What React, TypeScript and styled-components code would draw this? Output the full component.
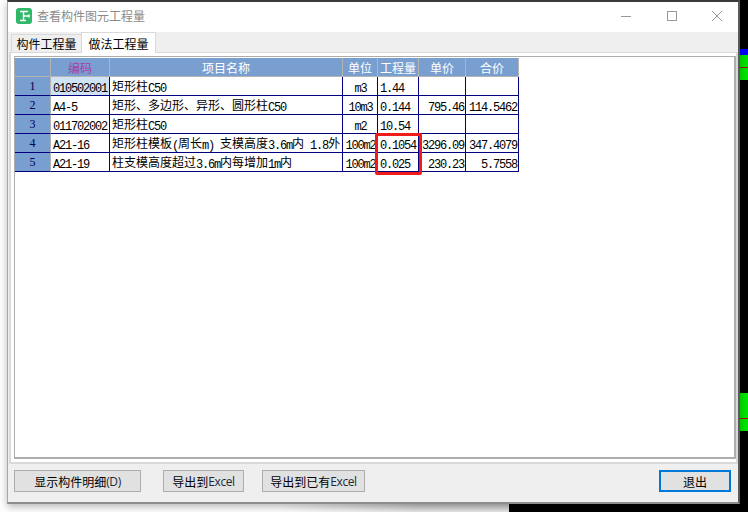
import React from 'react';
import styled, { createGlobalStyle } from 'styled-components';

const cjk = '"Noto Sans CJK SC", "Liberation Sans", sans-serif';

const GlobalStyle = createGlobalStyle`
  html, body {
    margin: 0;
    padding: 0;
    background: #fff;
  }
  * {
    box-sizing: border-box;
  }
`;

type Align = 'left' | 'center' | 'right';

const justify = { left: 'flex-start', center: 'center', right: 'flex-end' };

const __Desktop = styled.div`
  position: relative;
  width: 748px;
  height: 512px;
  overflow: hidden;
  background: #fff;
`;

const __BlackBackdrop = styled.div`
  position: absolute;
  right: 0;
  bottom: 0;
  width: 239px;
  height: 512px;
  background: #000;
`;

const __TaskEdge = styled.div`
  position: absolute;
  left: 280px;
  top: 504px;
  width: 229px;
  height: 8px;
  background: linear-gradient(180deg, #c4c4c4, #e8e8e8);
  mask-image: linear-gradient(90deg, transparent, #000 60%);
`;

const __Strip = styled.div<{ $top: number; $height: number; $color: string }>`
  position: absolute;
  left: 740px;
  top: ${(p) => p.$top}px;
  width: 8px;
  height: ${(p) => p.$height}px;
  background: ${(p) => p.$color};
`;

const __Window = styled.div`
  position: absolute;
  left: 7px;
  top: 0;
  width: 733px;
  height: 504px;
  display: flex;
  flex-direction: column;
  background: #efefef;
  border: 1px solid #a8a8a8;
  border-top: 2px solid #3a3a3a;
  border-right: 2px solid #5a5a5a;
  border-bottom: 2px solid #8c8c8c;
  box-shadow: 0 3px 8px rgba(0, 0, 0, 0.28);
  font-family: ${cjk};
  font-size: 12px;
`;

const __TitleBar = styled.div`
  display: flex;
  align-items: center;
  flex: 0 0 30px;
  padding: 0 16px 3px 8px;
  background: #fff;
`;

const __Title = styled.div`
  margin-left: 5px;
  color: #8a8a8a;
  line-height: 16px;
`;

const __Controls = styled.div`
  display: flex;
  align-items: center;
  gap: 35.5px;
  margin-left: auto;
  padding-top: 1px;
`;

const __Tabs = styled.div`
  display: flex;
  align-items: flex-end;
  flex: 0 0 20px;
  padding-left: 3px;
`;

const __Tab = styled.div<{ $active?: boolean }>`
  position: relative;
  z-index: ${(p) => (p.$active ? 1 : 0)};
  width: ${(p) => (p.$active ? 75 : 70)}px;
  height: ${(p) => (p.$active ? 21 : 18)}px;
  margin-bottom: ${(p) => (p.$active ? '-1px' : '0')};
  display: flex;
  align-items: center;
  justify-content: center;
  color: #000;
  background: ${(p) => (p.$active ? '#fff' : '#efefef')};
  border: 1px solid #d9d9d9;
  border-bottom: 0;
  border-right: ${(p) => (p.$active ? '1px solid #d9d9d9' : '0')};
`;

const __Pane = styled.div`
  flex: 0 0 412px;
  margin-left: 1px;
  padding: 3px 0 3px 3px;
  background: #fff;
  border: 2px solid #d9d9d9;
  border-top-width: 1px;
`;

const __TableBox = styled.div`
  height: 100%;
  padding-top: 1px;
  background: #fff;
  border: 1px solid #adadad;
  border-width: 1px 2px 2px 1px;
`;

const __Grid = styled.div`
  position: relative;
  display: grid;
  grid-template-columns: 36px 59px 233px 35px 41px 47px 53px;
  grid-auto-rows: 19px;
  width: max-content;
`;

const __HeadCell = styled.div<{ $magenta?: boolean }>`
  display: flex;
  align-items: center;
  justify-content: center;
  background: #789fd0;
  color: ${(p) => (p.$magenta ? '#a63ea6' : '#fff')};
  border-right: 1px solid #b4b4b4;
  border-bottom: 1px solid #b4b4b4;
`;

const __RowHead = styled(__HeadCell)`
  color: #000050;
  border-bottom: 1px solid #000080;
  font-family: "Liberation Serif", serif;
`;

const __Cell = styled.div<{ $align?: Align; $selected?: boolean }>`
  display: flex;
  align-items: center;
  justify-content: ${(p) => justify[p.$align ?? 'left']};
  padding: 0 1px 0 2px;
  overflow: hidden;
  white-space: pre;
  color: #000;
  background: ${(p) => (p.$selected ? '#cfe3f5' : '#fff')};
  border-right: 1px solid #000080;
  border-bottom: 1px solid #000080;
`;

const __CellText = styled.span`
  flex: none;
  margin-top: 2px;
  line-height: 18px;
`;

const __Num = styled.span`
  font-family: "Liberation Mono", monospace;
  font-size: 12px;
  letter-spacing: -1.2px;
  vertical-align: -1px;
`;

const __Highlight = styled.div`
  position: absolute;
  left: 360px;
  top: 75px;
  width: 47px;
  height: 42px;
  border: 3px solid #f01c1c;
  border-radius: 2px;
  pointer-events: none;
`;

const __Footer = styled.div`
  display: flex;
  align-items: flex-start;
  flex: 1;
  padding: 6px 7px 0 6px;
`;

const __Button = styled.div<{ $width?: number; $gap?: number }>`
  width: ${(p) => p.$width ?? 72}px;
  height: 22px;
  margin-left: ${(p) => p.$gap ?? 0}px;
  display: flex;
  align-items: center;
  justify-content: center;
  color: #000;
  background: #e1e1e1;
  border: 1px solid #adadad;
`;

const __Latin = styled.span`
  font-family: "Open Sans", sans-serif;
  letter-spacing: -0.4px;
  color: #1a2a3a;
`;

const __ExitButton = styled(__Button)`
  margin-left: auto;
  border: 2px solid #0078d7;
`;

interface RowData {
  no: string;
  code: string;
  name: React.ReactNode;
  unit: string;
  qty: string;
  price: string;
  total: string;
}

const rows: RowData[] = [
  { no: '1', code: '010502001', name: <>矩形柱<__Num>C50</__Num></>, unit: 'm3', qty: '1.44', price: '', total: '' },
  { no: '2', code: 'A4-5', name: <>矩形、多边形、异形、圆形柱<__Num>C50</__Num></>, unit: '10m3', qty: '0.144', price: '795.46', total: '114.5462' },
  { no: '3', code: '011702002', name: <>矩形柱<__Num>C50</__Num></>, unit: 'm2', qty: '10.54', price: '', total: '' },
  { no: '4', code: 'A21-16', name: <>矩形柱模板<__Num>(</__Num>周长<__Num>m) </__Num>支模高度<__Num>3.6m</__Num>内<__Num> 1.8</__Num>外</>, unit: '100m2', qty: '0.1054', price: '3296.09', total: '347.4079' },
  { no: '5', code: 'A21-19', name: <>柱支模高度超过<__Num>3.6m</__Num>内每增加<__Num>1m</__Num>内</>, unit: '100m2', qty: '0.025', price: '230.23', total: '5.7558' },
];

const App = () => (
  <__Desktop>
    <GlobalStyle />
    <__BlackBackdrop />
    <__TaskEdge />
    <__Strip $top={49} $height={6} $color="#0000ff" />
    <__Strip $top={55} $height={25} $color="#00e600" />
    <__Strip $top={67} $height={1} $color="#8a1c1c" />
    <__Strip $top={393} $height={38} $color="#00e600" />
    <__Strip $top={418} $height={1} $color="#a01010" />
    <__Window>
      <__TitleBar>
        <svg width="16" height="16" viewBox="0 0 16 16">
          <rect width="16" height="16" rx="3" fill="#2fb867" />
          <path d="M4 3.5h8M7.5 3.5v9M4 12.5h6M7.5 8h5.5M13 6.5v3" stroke="#fff" strokeWidth="1.5" fill="none" />
        </svg>
        <__Title>查看构件图元工程量</__Title>
        <__Controls>
          <svg width="10" height="10" viewBox="0 0 10 10">
            <path d="M0 5.5h10" stroke="#999" strokeWidth="1" />
          </svg>
          <svg width="10" height="10" viewBox="0 0 10 10">
            <rect x=".5" y=".5" width="9" height="9" fill="none" stroke="#999" strokeWidth="1" />
          </svg>
          <svg width="10" height="10" viewBox="0 0 10 10">
            <path d="M0 0l10 10M10 0L0 10" stroke="#999" strokeWidth="1" />
          </svg>
        </__Controls>
      </__TitleBar>

      <__Tabs>
        <__Tab>构件工程量</__Tab>
        <__Tab $active>做法工程量</__Tab>
      </__Tabs>

      <__Pane>
        <__TableBox>
          <__Grid>
            <__HeadCell />
            <__HeadCell $magenta>编码</__HeadCell>
            <__HeadCell>项目名称</__HeadCell>
            <__HeadCell>单位</__HeadCell>
            <__HeadCell>工程量</__HeadCell>
            <__HeadCell>单价</__HeadCell>
            <__HeadCell>合价</__HeadCell>
            {rows.map((row) => (
              <React.Fragment key={row.no}>
                <__RowHead>{row.no}</__RowHead>
                <__Cell $selected={row.no === '1'}><__CellText><__Num>{row.code}</__Num></__CellText></__Cell>
                <__Cell><__CellText>{row.name}</__CellText></__Cell>
                <__Cell $align="center"><__CellText><__Num>{row.unit}</__Num></__CellText></__Cell>
                <__Cell><__CellText><__Num>{row.qty}</__Num></__CellText></__Cell>
                <__Cell $align="right"><__CellText><__Num>{row.price}</__Num></__CellText></__Cell>
                <__Cell $align="right"><__CellText><__Num>{row.total}</__Num></__CellText></__Cell>
              </React.Fragment>
            ))}
            <__Highlight />
          </__Grid>
        </__TableBox>
      </__Pane>

      <__Footer>
        <__Button $width={127}>显示构件明细<__Latin>(D)</__Latin></__Button>
        <__Button $width={81} $gap={22}>导出到<__Latin>Excel</__Latin></__Button>
        <__Button $width={103} $gap={18}>导出到已有<__Latin>Excel</__Latin></__Button>
        <__ExitButton>退出</__ExitButton>
      </__Footer>
    </__Window>
  </__Desktop>
);

export default App;
